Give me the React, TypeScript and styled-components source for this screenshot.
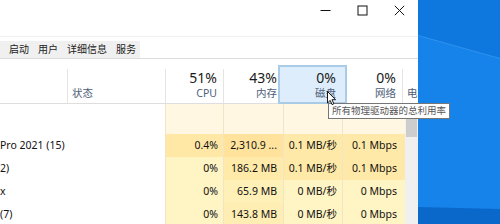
import React from "react";
import styled, { createGlobalStyle } from "styled-components";

const GlobalStyle = createGlobalStyle`
    html, body {
        margin: 0;
        padding: 0;
        background: #fff;
        overflow: hidden;
    }
    body {
        font-family: "Noto Sans", "Noto Sans CJK SC", sans-serif;
    }
`;

const Screen = styled.div`
    position: relative;
    display: flex;
    width: 500px;
    height: 224px;
    overflow: hidden;
`;

const Window = styled.div`
    display: flex;
    flex-direction: column;
    width: 418px;
    flex-shrink: 0;
    background: #fff;
`;

const TitleBar = styled.div`
    display: flex;
    justify-content: flex-end;
    align-items: flex-start;
    height: 30px;
`;

const CaptionButton = styled.div`
    display: flex;
    align-items: center;
    justify-content: center;
    width: 37px;
    height: 21px;
`;

const MenuGap = styled.div`
    height: 6px;
    border-bottom: 1px solid #f1f1f1;
    margin-bottom: 4px;
`;

const TabBar = styled.div`
    display: flex;
    height: 17px;
    border-bottom: 1px solid #dcdcdc;
`;

const TabStrip = styled.div`
    display: flex;
    width: 140px;
    padding-left: 4.5px;
    box-sizing: border-box;
    background: #f0f0f0;
`;

const Tab = styled.div`
    padding: 0 4.5px;
    font-size: 10px;
    line-height: 17px;
    color: #222;
    white-space: nowrap;
`;

const HeaderRow = styled.div`
    display: grid;
    grid-template-columns: 67px 98px 58px 60px 59px 60px 16px;
    height: 44px;
    border-bottom: 1px solid #dedede;
`;

const HeaderCell = styled.div<{ $left?: boolean; $divider?: boolean }>`
    position: relative;
    margin-top: 10px;
    border-left: ${(p) => (p.$divider ? "1px solid #e4e4e4" : "none")};
    display: flex;
    flex-direction: column;
    justify-content: flex-end;
    align-items: ${(p) => (p.$left ? "flex-start" : "flex-end")};
    padding: 0 6px 3px ${(p) => (p.$left ? "4px" : "0")};
    white-space: nowrap;
    overflow: visible;
`;

const HeaderText = styled.div`
    position: relative;
    z-index: 2;
    display: flex;
    flex-direction: column;
    align-items: inherit;
`;

const Percent = styled.span`
    font-size: 14px;
    line-height: 17px;
    color: #1a1a1a;
`;

const ColumnLabel = styled.span`
    font-size: 10.5px;
    line-height: 14px;
    color: #4e6079;
`;

const HoverBox = styled.div`
    position: absolute;
    z-index: 1;
    left: -6px;
    right: -5px;
    top: -4px;
    bottom: -1px;
    background: #deedfb;
    border: 2px solid #aacbe6;
    box-sizing: border-box;
`;

const Body = styled.div`
    display: flex;
    flex: 1;
    min-height: 0;
`;

const Table = styled.div`
    display: flex;
    flex-direction: column;
    width: 405px;
`;

const Row = styled.div<{ $height: number }>`
    display: grid;
    grid-template-columns: 165px 58px 60px 59px 63px;
    height: ${(p) => p.$height}px;
    flex-shrink: 0;
`;

const NameCell = styled.div<{ $shift: number }>`
    overflow: hidden;
    font-size: 10.5px;
    line-height: 23px;
    color: #111;
    white-space: nowrap;
    & > span {
        display: inline-block;
        margin-left: ${(p) => p.$shift}px;
    }
`;

const DataCell = styled.div<{ $bg: string; $pad: number }>`
    background: ${(p) => p.$bg};
    border-left: 1px solid #f0e5c6;
    padding-right: ${(p) => p.$pad}px;
    font-size: 10.5px;
    line-height: 23px;
    text-align: right;
    color: #111;
    white-space: nowrap;
    overflow: hidden;
`;

const Scrollbar = styled.div`
    width: 13px;
    background: #f0f0f0;
    padding-top: 15px;
    box-sizing: border-box;
`;

const Thumb = styled.div`
    height: 18px;
    margin: 0 1px;
    background: #cdcdcd;
`;

const Desktop = styled.div`
    flex: 1;
    display: flex;
`;

const Tooltip = styled.div`
    position: absolute;
    left: 328px;
    top: 103px;
    height: 16px;
    box-sizing: border-box;
    padding: 0 3px;
    border: 1px solid #767676;
    background: #fff;
    color: #575757;
    font-size: 9.5px;
    line-height: 14px;
    white-space: nowrap;
    z-index: 5;
`;

const Cursor = styled.svg`
    position: absolute;
    left: 327px;
    top: 91px;
    z-index: 6;
`;

const columns = [
    { pct: "51%", label: "CPU" },
    { pct: "43%", label: "内存" },
    { pct: "0%", label: "磁盘", hover: true },
    { pct: "0%", label: "网络" },
];

const rows = [
    { name: "Pro 2021 (15)", shift: 0, cells: [["0.4%", "#ffe8a6"], ["2,310.9 ...", "#ffe39d"], ["0.1 MB/秒", "#ffe9a8"], ["0.1 Mbps", "#ffe9a8"]] },
    { name: "2)", shift: 0, cells: [["0%", "#fff4c4"], ["186.2 MB", "#ffeaa9"], ["0.1 MB/秒", "#ffe9a8"], ["0.1 Mbps", "#ffe9a8"]] },
    { name: "x", shift: 0, cells: [["0%", "#fff4c4"], ["65.9 MB", "#fff0b8"], ["0 MB/秒", "#fff4c4"], ["0 Mbps", "#fff4c4"]] },
    { name: "(7)", shift: 0, cells: [["0%", "#fff4c4"], ["143.8 MB", "#ffeeb3"], ["0 MB/秒", "#fff4c4"], ["0 Mbps", "#fff4c4"]] },
];

const pads = [5, 6, 5, 8];

const Wallpaper = () => (
    <svg width="82" height="224" viewBox="0 0 82 224">
        <rect width="82" height="224" fill="#1683ea" />
        <polygon points="0,0 82,0 82,58 0,35" fill="#0e78de" />
        <line x1="0" y1="35.5" x2="82" y2="58.5" stroke="#3a98f0" strokeWidth="1" opacity="0.7" />
        <polygon points="0,207 82,209 82,224 0,224" fill="#0b68cb" />
    </svg>
);

const App = () =>
(
    <Screen>
        <GlobalStyle />
        <Window>
            <TitleBar>
                <CaptionButton>
                    <svg width="11" height="11" viewBox="0 0 11 11">
                        <line x1="0.5" y1="5.5" x2="10.5" y2="5.5" stroke="#111" strokeWidth="1" />
                    </svg>
                </CaptionButton>
                <CaptionButton>
                    <svg width="11" height="11" viewBox="0 0 11 11">
                        <rect x="1" y="1" width="9" height="9" fill="none" stroke="#111" strokeWidth="1" />
                    </svg>
                </CaptionButton>
                <CaptionButton>
                    <svg width="11" height="11" viewBox="0 0 11 11">
                        <path d="M0.8 0.8 L10.2 10.2 M10.2 0.8 L0.8 10.2" stroke="#111" strokeWidth="1" />
                    </svg>
                </CaptionButton>
            </TitleBar>
            <MenuGap />
            <TabBar>
                <TabStrip>
                    <Tab>启动</Tab>
                    <Tab>用户</Tab>
                    <Tab>详细信息</Tab>
                    <Tab>服务</Tab>
                </TabStrip>
            </TabBar>
            <HeaderRow>
                <HeaderCell $left />
                <HeaderCell $left $divider>
                    <HeaderText>
                        <ColumnLabel>状态</ColumnLabel>
                    </HeaderText>
                </HeaderCell>
                {columns.map((c) => (
                    <HeaderCell key={c.label} $divider>
                        {c.hover && <HoverBox />}
                        <HeaderText>
                            <Percent>{c.pct}</Percent>
                            <ColumnLabel>{c.label}</ColumnLabel>
                        </HeaderText>
                    </HeaderCell>
                ))}
                <HeaderCell $left $divider>
                    <HeaderText>
                        <ColumnLabel>电</ColumnLabel>
                    </HeaderText>
                </HeaderCell>
            </HeaderRow>
            <Body>
                <Table>
                    <Row $height={30}>
                        <NameCell $shift={0} />
                        {pads.map((p, i) => (
                            <DataCell key={i} $bg="#fff7e1" $pad={p} />
                        ))}
                    </Row>
                    {rows.map((r) => (
                        <Row key={r.name} $height={23}>
                            <NameCell $shift={r.shift}>
                                <span>{r.name}</span>
                            </NameCell>
                            {r.cells.map(([text, bg], i) => (
                                <DataCell key={i} $bg={bg} $pad={pads[i]}>{text}</DataCell>
                            ))}
                        </Row>
                    ))}
                </Table>
                <Scrollbar>
                    <Thumb />
                </Scrollbar>
            </Body>
        </Window>
        <Desktop>
            <Wallpaper />
        </Desktop>
        <Cursor width="10" height="15" viewBox="0 0 10 15">
            <path d="M0.5 0.5 L0.5 12 L3.2 9.4 L5 13.6 L6.8 12.8 L5 8.7 L8.6 8.7 Z" fill="#fff" stroke="#000" strokeWidth="0.9" strokeLinejoin="round" />
        </Cursor>
        <Tooltip>所有物理驱动器的总利用率</Tooltip>
    </Screen>
);

export default App;
